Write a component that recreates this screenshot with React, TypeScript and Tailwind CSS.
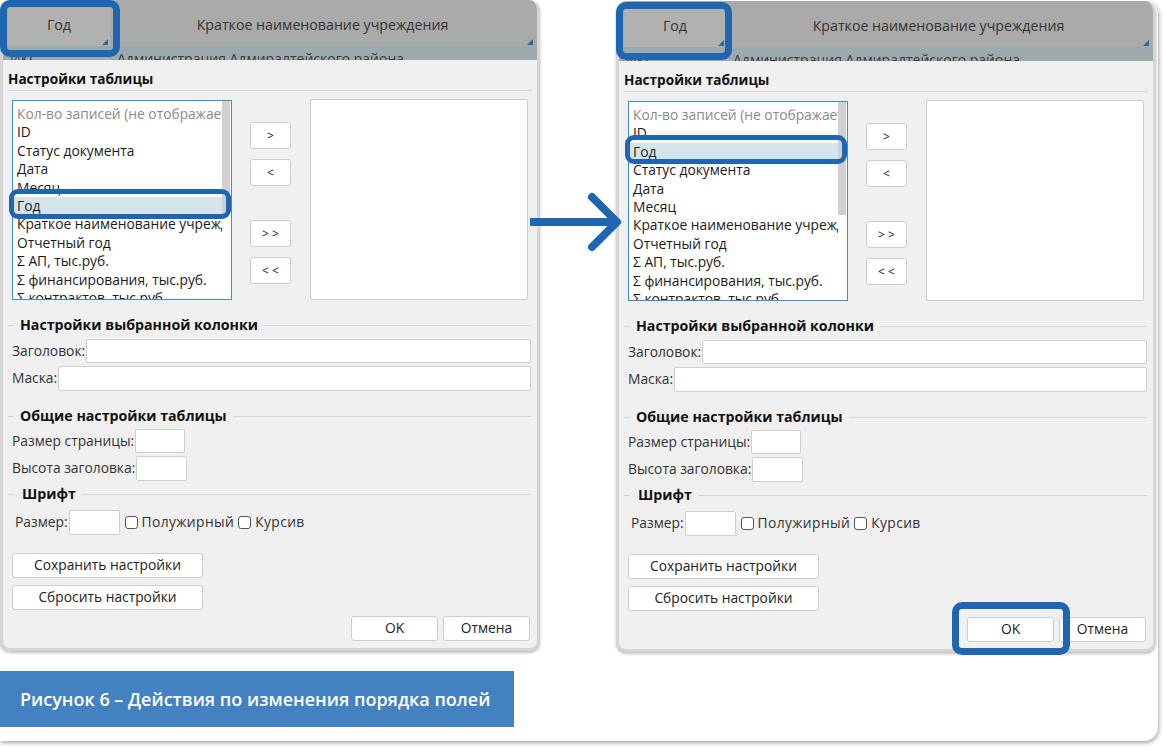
import React from "react";

const LEFT_ITEMS = [
  "Кол-во записей (не отображается)",
  "ID",
  "Статус документа",
  "Дата",
  "Месяц",
  "Год",
  "Краткое наименование учреждения",
  "Отчетный год",
  "Σ АП, тыс.руб.",
  "Σ финансирования, тыс.руб.",
  "Σ контрактов, тыс.руб.",
];

const RIGHT_ITEMS = [
  "Кол-во записей (не отображается)",
  "ID",
  "Год",
  "Статус документа",
  "Дата",
  "Месяц",
  "Краткое наименование учреждения",
  "Отчетный год",
  "Σ АП, тыс.руб.",
  "Σ финансирования, тыс.руб.",
  "Σ контрактов, тыс.руб.",
];

function Tri() {
  return (
    <svg width="6" height="6" viewBox="0 0 6 6" className="absolute right-[2px] bottom-[1px]">
      <polygon points="6,0 6,6 0,6" fill="#1b6e9e" />
    </svg>
  );
}

function Btn({ children, className }: { children: React.ReactNode; className: string }) {
  return (
    <div
      className={
        "flex items-center justify-center bg-white border border-[#cdcdcd] rounded-[3px] text-[#222] " +
        className
      }
    >
      {children}
    </div>
  );
}

function Input({ className }: { className: string }) {
  return <div className={"bg-white border border-[#cfcfcf] rounded-[2px] " + className} />;
}

function Section({ title, extra }: { title: string; extra?: string }) {
  return (
    <div className="flex items-center pl-[5px] pr-[6px] h-[16px]">
      <div className="w-[6px] h-px bg-[#d6d6d6]" />
      <div className={"mx-[6px] text-[14.2px] font-bold leading-[16px] text-[#111] whitespace-nowrap " + (extra || "")}>
        {title}
      </div>
      <div className="flex-1 h-px bg-[#d6d6d6]" />
    </div>
  );
}

function Checkbox() {
  return <div className="w-[13px] h-[13px] bg-white border border-[#555] rounded-[3px]" />;
}

function Panel({ items, sel, className }: { items: string[]; sel: number; className: string }) {
  return (
    <div
      className={
        "w-[540px] h-[651px] rounded-[10px] overflow-hidden border-x-[3px] border-b-[3px] border-[#d5d5d5] bg-[#f0f0f0] flex flex-col shadow-[0_2px_3px_rgba(0,0,0,0.25)] " +
        className
      }
    >
      {/* grid header */}
      <div className="h-[46px] bg-[#aaaaaa] flex text-[14.2px] leading-[16px] text-[#333] shrink-0">
        <div className="relative ml-[5px] mt-[8px] w-[102px] bg-[#b1b1b1] flex justify-center pt-[9px]">
          Год
          <Tri />
        </div>
        <div className="relative flex-1 mr-[2px] flex justify-center pt-[17px]">
          Краткое наименование учреждения
          <Tri />
        </div>
      </div>
      {/* partially hidden row */}
      <div className="h-[14px] bg-[#9ca9ad] overflow-hidden flex text-[14px] leading-[16px] text-[#3a3a3a] shrink-0">
        <div className="pt-[5px] pl-[7px] w-[114px]">ИКС</div>
        <div className="pt-[5px]">Администрация Адмиралтейского района</div>
      </div>
      {/* dialog */}
      <div className="flex-1 flex flex-col text-[13.8px]">
        <div className="pl-[5px] pt-[11px] text-[13.6px] font-bold leading-[16px] text-[#111]">Настройки таблицы</div>
        <div className="mt-[3px] mx-[5px] h-px bg-[#d6d6d6]" />
        <div className="mt-[9px] flex pl-[9px]">
          <div className="relative w-[220px] h-[200px] border border-[#3d8fc8] bg-white overflow-hidden">
            <div className="absolute right-[1px] top-0 w-[8px] h-[113px] bg-[#d0d0d0]" />
            <div className="pt-[4px] pr-[9px] leading-[18.4px] text-[#1a1a1a]">
              {items.map((t, i) => (
                <div
                  key={i}
                  className={
                    "pl-[4px] whitespace-nowrap overflow-hidden " +
                    (i === 0 ? "text-[#8a8a8a] " : "") +
                    (i === sel ? "bg-[#d4e4ea] " : "")
                  }
                >
                  {t}
                </div>
              ))}
            </div>
          </div>
          <div className="ml-[18px] w-[41px] flex flex-col text-[12px]">
            <Btn className="mt-[22px] h-[27px]">&gt;</Btn>
            <Btn className="mt-[10px] h-[27px]">&lt;</Btn>
            <Btn className="mt-[34px] h-[27px]">&gt; &gt;</Btn>
            <Btn className="mt-[10px] h-[27px]">&lt; &lt;</Btn>
          </div>
          <div className="ml-[19px] -mt-px w-[218px] h-[201px] border border-[#cbcbcb] bg-white rounded-[2px]" />
        </div>

        <div className="mt-[17px]">
          <Section title="Настройки выбранной колонки" />
        </div>
        <div className="mt-[6px] flex items-center pl-[9px] pr-[6px] text-[#333]">
          <span>Заголовок:</span>
          <Input className="flex-1 h-[24px] ml-px" />
        </div>
        <div className="mt-[3px] flex items-center pl-[9px] pr-[6px] text-[#333]">
          <span>Маска:</span>
          <Input className="flex-1 h-[25px] ml-px" />
        </div>

        <div className="mt-[17px]">
          <Section title="Общие настройки таблицы" />
        </div>
        <div className="mt-[5px] flex items-center pl-[9px] text-[#333]">
          <span>Размер страницы:</span>
          <Input className="w-[50px] h-[24px] ml-px" />
        </div>
        <div className="mt-[3px] flex items-center pl-[9px] text-[#333]">
          <span>Высота заголовка:</span>
          <Input className="w-[51px] h-[25px] ml-px" />
        </div>

        <div className="mt-[5px]">
          <Section title="Шрифт" extra="ml-[8px]" />
        </div>
        <div className="mt-[8px] flex items-center pl-[12px] text-[#333]">
          <span>Размер:</span>
          <Input className="w-[51px] h-[25px] ml-px" />
          <div className="ml-[5px]">
            <Checkbox />
          </div>
          <span className="ml-[4px] tracking-[0.4px]">Полужирный</span>
          <div className="ml-[4px]">
            <Checkbox />
          </div>
          <span className="ml-[4px] tracking-[0.4px]">Курсив</span>
        </div>

        <div className="mt-[18px] pl-[9px]">
          <Btn className="w-[191px] h-[25px]">Сохранить настройки</Btn>
        </div>
        <div className="mt-[7px] pl-[9px]">
          <Btn className="w-[191px] h-[25px]">Сбросить настройки</Btn>
        </div>
        <div className="mt-[6px] flex justify-end pr-[7px] gap-[5px]">
          <Btn className="w-[87px] h-[25px]">OK</Btn>
          <Btn className="w-[87px] h-[25px]">Отмена</Btn>
        </div>
      </div>
    </div>
  );
}

function Outline({ className }: { className: string }) {
  return <div className={"absolute border-[#1e66b2] " + className} />;
}

export default function App() {
  return (
    <div className="w-[1164px] h-[748px] bg-white overflow-hidden font-['Open_Sans',sans-serif]">
      <div className="relative w-[1158px] h-[741px] bg-white rounded-br-[14px] rounded-tr-[14px] shadow-[1px_2px_4px_rgba(0,0,0,0.35)]">
        <div className="flex gap-[76px]">
          <Panel items={LEFT_ITEMS} sel={5} className="" />
          <Panel items={RIGHT_ITEMS} sel={2} className="mt-px" />
        </div>
        <div className="mt-[19px] w-[514px] h-[56px] bg-[#4481c1] flex items-center pl-[20px] text-white text-[18px] font-semibold">
          Рисунок 6 – Действия по изменения порядка полей
        </div>

        {/* highlight outlines */}
        <Outline className="left-0 top-0 w-[120px] h-[57px] border-[7px] rounded-[10px]" />
        <Outline className="left-[9px] top-[189px] w-[222px] h-[30px] border-[5px] rounded-[9px]" />
        <Outline className="left-[616px] top-[2px] w-[116px] h-[58px] border-[7px] rounded-[10px]" />
        <Outline className="left-[625px] top-[135px] w-[222px] h-[29px] border-[5px] rounded-[9px]" />
        <Outline className="left-[952px] top-[602px] w-[118px] h-[53px] border-[7px] rounded-[10px]" />

        {/* arrow */}
        <svg
          className="absolute left-[525px] top-[190px]"
          width="100"
          height="65"
          viewBox="0 0 100 65"
          fill="none"
          stroke="#1e66b2"
          strokeWidth="8"
          strokeLinecap="round"
          strokeLinejoin="round"
        >
          <path d="M5 32 H90" strokeLinecap="butt" />
          <path d="M67 7 L92 32 L67 57" />
        </svg>
      </div>
    </div>
  );
}
